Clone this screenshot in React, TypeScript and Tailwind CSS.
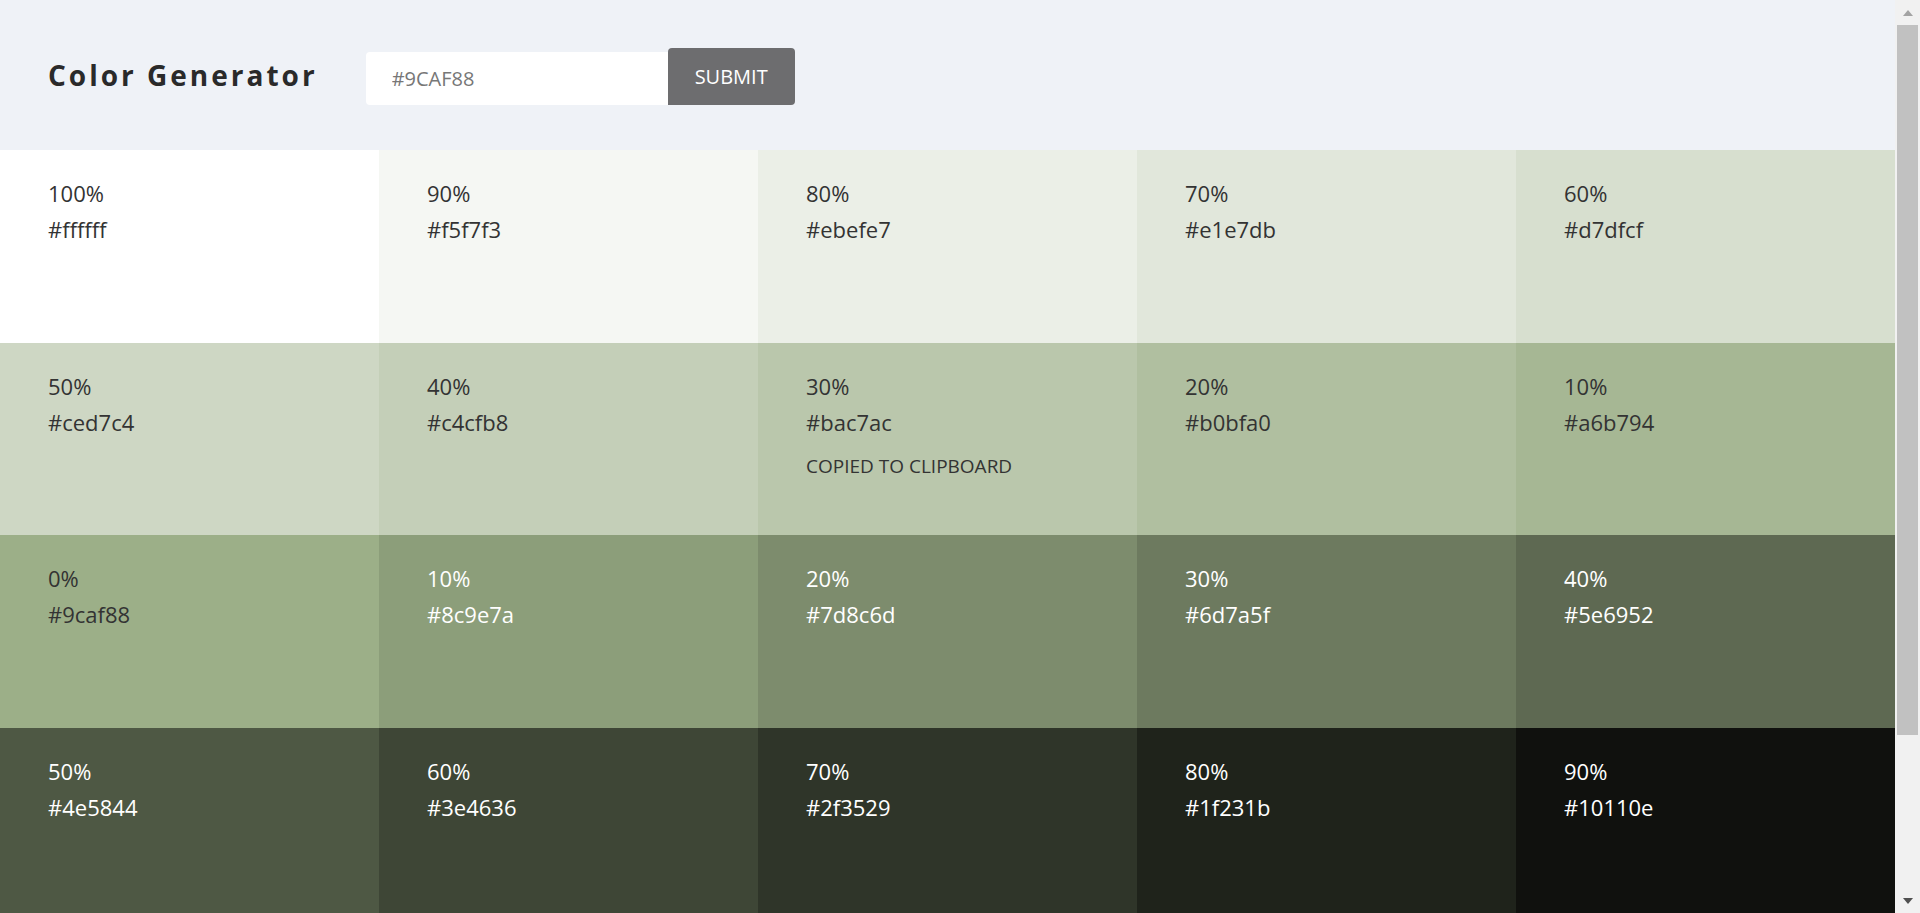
import { useState } from 'react';

type Swatch = { weight: number; hex: string; dark: boolean };

const swatches: Swatch[] = [
  { weight: 100, hex: 'ffffff', dark: false },
  { weight: 90, hex: 'f5f7f3', dark: false },
  { weight: 80, hex: 'ebefe7', dark: false },
  { weight: 70, hex: 'e1e7db', dark: false },
  { weight: 60, hex: 'd7dfcf', dark: false },
  { weight: 50, hex: 'ced7c4', dark: false },
  { weight: 40, hex: 'c4cfb8', dark: false },
  { weight: 30, hex: 'bac7ac', dark: false },
  { weight: 20, hex: 'b0bfa0', dark: false },
  { weight: 10, hex: 'a6b794', dark: false },
  { weight: 0, hex: '9caf88', dark: false },
  { weight: 10, hex: '8c9e7a', dark: true },
  { weight: 20, hex: '7d8c6d', dark: true },
  { weight: 30, hex: '6d7a5f', dark: true },
  { weight: 40, hex: '5e6952', dark: true },
  { weight: 50, hex: '4e5844', dark: true },
  { weight: 60, hex: '3e4636', dark: true },
  { weight: 70, hex: '2f3529', dark: true },
  { weight: 80, hex: '1f231b', dark: true },
  { weight: 90, hex: '10110e', dark: true },
];

function SingleColor({ item, copied }: { item: Swatch; copied: boolean }) {
  return (
    <article
      className={`pl-12 pt-[25px] text-[22px] leading-[36px] cursor-pointer ${item.dark ? 'text-white' : 'text-[#333]'}`}
      style={{ backgroundColor: `#${item.hex}` }}
    >
      <p>{item.weight}%</p>
      <p>#{item.hex}</p>
      {copied && <p className="mt-[14px] text-[19px] leading-6 uppercase">copied to clipboard</p>}
    </article>
  );
}

function Scrollbar() {
  return (
    <div className="w-[25px] h-full bg-[#f1f1f1] flex flex-col items-center">
      <div className="h-[25px] w-full flex items-center justify-center">
        <svg width="10" height="6" viewBox="0 0 10 6">
          <path d="M0 6 L5 0 L10 6 Z" fill="#a3a3a3" />
        </svg>
      </div>
      <div className="w-[21px] h-[710px] bg-[#c1c1c1]" />
      <div className="flex-1" />
      <div className="h-[25px] w-full flex items-center justify-center">
        <svg width="10" height="6" viewBox="0 0 10 6">
          <path d="M0 0 L10 0 L5 6 Z" fill="#505050" />
        </svg>
      </div>
    </div>
  );
}

export default function App() {
  const [color, setColor] = useState('');

  return (
    <div className="h-[913px] w-full flex overflow-hidden" style={{ fontFamily: '"Open Sans", "Liberation Sans", sans-serif' }}>
      <main className="flex-1 min-w-0">
        <section className="h-[150px] bg-[#eff2f7] flex items-center pl-12">
          <h3 className="text-[28px] font-bold tracking-[3px] text-[#2a2a2a] mr-[48px]">Color Generator</h3>
          <form className="flex items-end mt-[3px]" onSubmit={(e) => e.preventDefault()}>
            <input
              type="text"
              value={color}
              onChange={(e) => setColor(e.target.value)}
              placeholder="#9CAF88"
              className="w-[302px] h-[53px] bg-white rounded-l-[4px] pl-[26px] text-[20px] text-[#555] placeholder:text-[#777] outline-none"
            />
            <button
              type="submit"
              className="h-[57px] px-[27px] bg-[#6d6d6f] text-white text-[20px] rounded-[4px] rounded-bl-none uppercase"
            >
              submit
            </button>
          </form>
        </section>
        <section className="grid grid-cols-5 auto-rows-[192.7px]">
          {swatches.map((s, i) => (
            <SingleColor key={i} item={s} copied={i === 7} />
          ))}
        </section>
      </main>
      <Scrollbar />
    </div>
  );
}
